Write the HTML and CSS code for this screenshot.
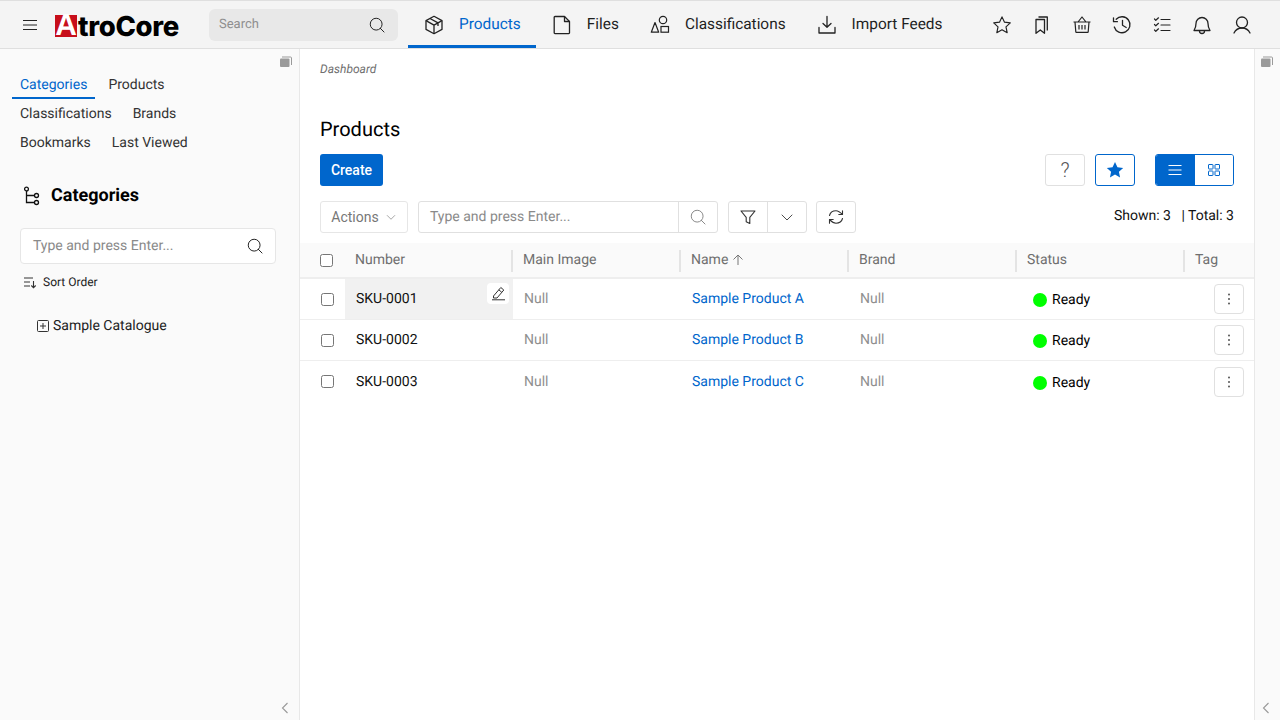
FILE: index.html
```html
<!DOCTYPE html>
<html lang="en">
<head>
<meta charset="utf-8">
<title>Products</title>
<link rel="stylesheet" href="styles.css">
</head>
<body>
<svg class="defs" width="0" height="0" aria-hidden="true">
  <symbol id="i-search" viewBox="0 0 256 256"><circle cx="116" cy="116" r="84" fill="none" stroke="currentColor" stroke-width="14"/><line x1="175" y1="175" x2="228" y2="228" stroke="currentColor" stroke-width="14" stroke-linecap="round"/></symbol>
  <symbol id="i-chev" viewBox="0 0 256 256"><polyline points="48,96 128,176 208,96" fill="none" stroke="currentColor" stroke-width="14" stroke-linecap="round" stroke-linejoin="round"/></symbol>
  <symbol id="i-kebab" viewBox="0 0 16 16"><circle cx="8" cy="3.500" r="1" fill="#555"/><circle cx="8" cy="8" r="1" fill="#555"/><circle cx="8" cy="12.500" r="1" fill="#555"/></symbol>
</svg>

<header class="topbar">
  <button class="burger" aria-label="Menu">
    <svg width="16" height="16" viewBox="0 0 16 16"><path d="M1 3.500h14M1 8h14M1 12.500h14" stroke="#222" stroke-width="1.200" fill="none"/></svg>
  </button>
  <div class="logo"><span class="logo-a">A</span><span class="logo-t">troCore</span></div>
  <div class="global-search">
    <span>Search</span>
    <svg viewBox="0 0 256 256" width="18" height="18"><use href="#i-search"/></svg>
  </div>
  <nav class="mainnav">
    <a class="nav-item active">
      <svg width="20" height="20" viewBox="0 0 20 20" fill="none" stroke="#222" stroke-width="1.300" stroke-linejoin="round"><path d="M10 1.300l8 4.300v8.800l-8 4.300-8-4.300V5.600z"/><path d="M2 5.600l8 4.500 8-4.500M10 10.100v8.300M6 3.500l8 4.400v3"/></svg>
      <span>Products</span>
    </a>
    <a class="nav-item">
      <svg width="20" height="20" viewBox="0 0 20 20" fill="none" stroke="#222" stroke-width="1.300" stroke-linejoin="round"><path d="M3 1.500h9.500l5 5v11.300a.8.8 0 0 1-.8.800H3a.8.8 0 0 1-.8-.8V2.300a.8.8 0 0 1 .8-.8z"/><path d="M12.500 1.500v5h5"/></svg>
      <span>Files</span>
    </a>
    <a class="nav-item">
      <svg width="20" height="20" viewBox="0 0 20 20" fill="none" stroke="#222" stroke-width="1.200"><circle cx="13" cy="5" r="3.700"/><path d="M5 7.500l3.700 9.700H1.300z" stroke-linejoin="round"/><rect x="11" y="11.500" width="7.500" height="5.700"/></svg>
      <span>Classifications</span>
    </a>
    <a class="nav-item">
      <svg width="20" height="20" viewBox="0 0 20 20" fill="none" stroke="#222" stroke-width="1.300" stroke-linecap="round" stroke-linejoin="round"><path d="M10 1.500v10.500M6 8.500l4 3.800 4-3.800M2 12.500v5.500h16v-5.500"/></svg>
      <span>Import Feeds</span>
    </a>
  </nav>
  <div class="tools">
    <svg width="20" height="20" viewBox="0 0 256 256" fill="none" stroke="#222" stroke-width="15" stroke-linejoin="round"><path d="M128 24l32 68 74 9-55 51 15 74-66-37-66 37 15-74-55-51 74-9z"/></svg>
    <svg width="20" height="20" viewBox="0 0 20 20" fill="none" stroke="#222" stroke-width="1.300" stroke-linejoin="round"><path d="M4 4.500h8.500v13.800l-4.200-3.300L4 18.300z"/><path d="M6.500 2h8.800v13.500"/></svg>
    <svg width="20" height="20" viewBox="0 0 20 20" fill="none" stroke="#222" stroke-width="1.200" stroke-linejoin="round"><path d="M1.500 7h17M6 7l4-5 4 5M3 7l.8 9.800a.6.6 0 0 0 .6.500h11.200a.6.6 0 0 0 .6-.5L17 7M7 10v4.500M10 10v4.500M13 10v4.500"/></svg>
    <svg width="20" height="20" viewBox="0 0 20 20" fill="none" stroke="#222" stroke-width="1.300" stroke-linecap="round" stroke-linejoin="round"><path d="M4.200 4.200a8 8 0 1 1-1.900 7.800"/><path d="M1.500 2.800v3.900h3.900M10.500 5.300v5l3.700 2.200"/></svg>
    <svg width="20" height="20" viewBox="0 0 20 20" fill="none" stroke="#222" stroke-width="1.200" stroke-linecap="round" stroke-linejoin="round"><path d="M9 4.500h9M9 10h9M9 15.500h9M2.500 4l1.300 1.300L6.500 2.800M2.500 9.500l1.300 1.300 2.700-2.500M2.500 15l1.300 1.300 2.700-2.500"/></svg>
    <svg width="20" height="20" viewBox="0 0 20 20" fill="none" stroke="#222" stroke-width="1.300" stroke-linejoin="round"><path d="M4 8.500a6 6 0 0 1 12 0c0 3.500 1 5.500 2 7H2c1-1.500 2-3.500 2-7z"/><path d="M7.500 16a2.500 2.500 0 0 0 5 0"/></svg>
    <svg width="20" height="20" viewBox="0 0 20 20" fill="none" stroke="#222" stroke-width="1.300" stroke-linecap="round"><circle cx="10" cy="7.500" r="5.500"/><path d="M2 18c1.500-3 4.500-5 8-5s6.500 2 8 5"/></svg>
  </div>
</header>

<div class="layout">
  <aside class="sidebar">
    <svg class="collapse-mark" width="12" height="12" viewBox="0 0 12 12"><rect x="0" y="2.500" width="9.500" height="8.500" rx="1" fill="#9a9a9a"/><path d="M2 1h8.500a1 1 0 0 1 1 1v7" fill="none" stroke="#9a9a9a"/></svg>
    <div class="side-tabs">
      <a class="side-tab active">Categories</a><a class="side-tab">Products</a>
      <a class="side-tab">Classifications</a><a class="side-tab">Brands</a>
      <a class="side-tab">Bookmarks</a><a class="side-tab">Last Viewed</a>
    </div>
    <h2 class="side-title">
      <svg width="20" height="20" viewBox="0 0 20 20" fill="none" stroke="#111" stroke-width="1.300"><circle cx="4.500" cy="3" r="1.900"/><circle cx="14.500" cy="9.500" r="2"/><circle cx="14.500" cy="16.500" r="2"/><path d="M4.500 5v11.500h8M4.500 9.500h8"/></svg>
      <span>Categories</span>
    </h2>
    <div class="side-search">
      <span>Type and press Enter...</span>
      <svg viewBox="0 0 256 256" width="18" height="18"><use href="#i-search"/></svg>
    </div>
    <div class="sort-order">
      <svg width="14" height="14" viewBox="0 0 14 14" fill="none" stroke="#333" stroke-width="1.100"><path d="M1 3h9M1 7h6M1 11h6M10.500 6v6.500M8.300 10.500l2.200 2.200 2.200-2.200"/></svg>
      <span>Sort Order</span>
    </div>
    <div class="tree-node">
      <svg width="12" height="12" viewBox="0 0 12 12" fill="none" stroke="#333"><rect x=".5" y=".5" width="11" height="11" rx="1"/><path d="M3 6h6M6 3v6"/></svg>
      <span>Sample Catalogue</span>
    </div>
    <svg class="side-arrow" width="8" height="12" viewBox="0 0 8 12" fill="none" stroke="#999" stroke-width="1.100"><path d="M6.500 1L1.500 6l5 5"/></svg>
  </aside>

  <main class="content">
    <div class="crumb">Dashboard</div>
    <h1 class="page-title">Products</h1>
    <div class="action-row">
      <button class="btn-create">Create</button>
      <div class="action-right">
        <button class="btn-square help">?</button>
        <button class="btn-square fav" aria-label="Favourite"><svg width="18" height="18" viewBox="0 0 256 256" fill="#0066cc"><path d="M128 14l35 74 81 10-60 55 16 80-72-40-72 40 16-80-60-55 81-10z"/></svg></button>
        <div class="view-toggle">
          <span class="vt on"><svg width="16" height="16" viewBox="0 0 16 16" stroke="#fff" fill="none"><path d="M1.500 3.500h13M1.500 8h13M1.500 12.500h13"/></svg></span>
          <span class="vt"><svg width="14" height="14" viewBox="0 0 14 14" stroke="#0066cc" fill="none"><rect x="1.500" y="1.500" width="4.500" height="4.500" rx=".5"/><rect x="8" y="1.500" width="4.500" height="4.500" rx=".5"/><rect x="1.500" y="8" width="4.500" height="4.500" rx=".5"/><rect x="8" y="8" width="4.500" height="4.500" rx=".5"/></svg></span>
        </div>
      </div>
    </div>
    <div class="filter-row">
      <button class="btn-outline actions">Actions <svg viewBox="0 0 256 256" width="12" height="12"><use href="#i-chev"/></svg></button>
      <div class="filter-search">
        <span class="fs-text">Type and press Enter...</span>
        <span class="fs-icon"><svg viewBox="0 0 256 256" width="18" height="18"><use href="#i-search"/></svg></span>
      </div>
      <div class="filter-group">
        <span class="fg-cell"><svg width="16" height="16" viewBox="0 0 16 16" fill="none" stroke="#333" stroke-width="1.100" stroke-linejoin="round"><path d="M1 2h14l-5.200 6.300v6.200l-3.600-1.800V8.300z"/></svg></span>
        <span class="fg-cell"><svg viewBox="0 0 256 256" width="16" height="16"><use href="#i-chev"/></svg></span>
      </div>
      <button class="btn-refresh" aria-label="Refresh"><svg width="16" height="16" viewBox="0 0 16 16" fill="none" stroke="#333" stroke-width="1.100" stroke-linecap="round" stroke-linejoin="round"><path d="M1.500 6.500C2.300 3.500 4.800 1.800 8 1.800c2.300 0 4 1.200 6.500 3.700M14.500 1.800v3.700h-3.700M14.500 9.500c-.8 3-3.300 4.700-6.500 4.700-2.300 0-4-1.200-6.500-3.700M1.500 14.200v-3.700h3.700"/></svg></button>
      <div class="counts">Shown: 3 &nbsp;&nbsp;| Total: 3</div>
    </div>

    <div class="grid-table">
      <div class="row head">
        <div class="cell check"><span class="cb"></span></div>
        <div class="cell first">Number</div>
        <div class="cell sep">Main Image</div>
        <div class="cell sep">Name <svg width="12" height="12" viewBox="0 0 12 12" fill="none" stroke="#777"><path d="M6 11V1M1.500 5.500L6 1l4.500 4.500"/></svg></div>
        <div class="cell sep">Brand</div>
        <div class="cell sep">Status</div>
        <div class="cell sep">Tag</div>
      </div>
      <div class="row">
        <div class="cell check"><span class="cb"></span></div>
        <div class="cell num hover">SKU-0001
          <span class="edit"><svg width="15" height="15" viewBox="0 0 15 15" fill="none" stroke="#333" stroke-linejoin="round"><path d="M2.500 10L9.800 1.500l3 2.500L6 12H2.500zM7.800 3.800l3 2.500M1 13.800h13"/></svg></span>
        </div>
        <div class="cell null">Null</div>
        <div class="cell link">Sample Product A</div>
        <div class="cell null">Null</div>
        <div class="cell status"><i class="dot"></i>Ready</div>
        <div class="cell more"><button class="kebab" aria-label="More"><svg width="16" height="16"><use href="#i-kebab"/></svg></button></div>
      </div>
      <div class="row">
        <div class="cell check"><span class="cb"></span></div>
        <div class="cell num">SKU-0002</div>
        <div class="cell null">Null</div>
        <div class="cell link">Sample Product B</div>
        <div class="cell null">Null</div>
        <div class="cell status"><i class="dot"></i>Ready</div>
        <div class="cell more"><button class="kebab" aria-label="More"><svg width="16" height="16"><use href="#i-kebab"/></svg></button></div>
      </div>
      <div class="row last">
        <div class="cell check"><span class="cb"></span></div>
        <div class="cell num">SKU-0003</div>
        <div class="cell null">Null</div>
        <div class="cell link">Sample Product C</div>
        <div class="cell null">Null</div>
        <div class="cell status"><i class="dot"></i>Ready</div>
        <div class="cell more"><button class="kebab" aria-label="More"><svg width="16" height="16"><use href="#i-kebab"/></svg></button></div>
      </div>
    </div>
  </main>

  <aside class="rightbar">
    <svg class="collapse-mark" width="12" height="12" viewBox="0 0 12 12"><rect x="0" y="2.500" width="9.500" height="8.500" rx="1" fill="#9a9a9a"/><path d="M2 1h8.500a1 1 0 0 1 1 1v7" fill="none" stroke="#9a9a9a"/></svg>
    <svg class="side-arrow" width="8" height="12" viewBox="0 0 8 12" fill="none" stroke="#999" stroke-width="1.100"><path d="M6.500 1L1.500 6l5 5"/></svg>
  </aside>
</div>
</body>
</html>
```

FILE: styles.css
```css
* { box-sizing: border-box; }
html, body { margin: 0; height: 100%; }
body { width: 1280px; height: 720px; overflow: hidden; background: #fff; color: #000; font-family: Roboto, "Liberation Sans", sans-serif; font-size: 14px; text-rendering: geometricPrecision; display: flex; flex-direction: column; }
button { font-family: inherit; font-size: 14px; padding: 0; cursor: pointer; }
.defs { position: absolute; }

.topbar { height: 49px; flex: none; display: flex; align-items: center; background: #f4f4f4; border-top: 1px solid #dfdfdf; border-bottom: 1px solid #dfdfdf; }
.burger { width: 16px; height: 16px; margin-left: 22px; background: none; border: 0; display: flex; }
.logo { margin-left: 17px; width: 125px; display: flex; align-items: center; margin-top: 2px; }
.logo-a { width: 22px; height: 22px; background: #c70e1a; color: #fff; font: 700 30px/22px "Liberation Sans", sans-serif; text-align: center; }
.logo-t { font: 800 27.500px/24px Inter, sans-serif; color: #000; letter-spacing: -.3px; margin-left: 1px; }
.global-search { margin-left: 29px; width: 189px; height: 32px; background: #e8e8e8; border-radius: 6px; display: flex; align-items: center; justify-content: space-between; padding: 0 12px 0 10px; font-size: 13px; color: #8f8f8f; }
.global-search svg { color: #222; }
.mainnav { margin-left: 10px; display: flex; height: 47px; align-self: flex-start; }
.nav-item { display: flex; align-items: center; gap: 15px; padding: 2px 15px 0 16px; font-size: 15.400px; color: #1f1f1f; border-bottom: 3px solid transparent; }
.nav-item svg { margin-top: 2px; }
.nav-item:last-child { padding-right: 0; }
.nav-item.active { color: #0066cc; border-bottom-color: #0066cc; }
.tools { margin-left: auto; margin-right: 28px; display: flex; gap: 20px; }

.layout { flex: 1; display: flex; min-height: 0; }
.sidebar { position: relative; width: 300px; flex: none; background: #fafafa; border-right: 1px solid #e8e8e8; padding: 0 23px 0 20px; }
.collapse-mark { position: absolute; right: 7px; top: 7px; }
.side-arrow { position: absolute; right: 10px; bottom: 6px; }
.side-tabs { margin: 27px 0 0 -8px; display: flex; flex-wrap: wrap; width: 240px; row-gap: 6px; }
.side-tab { height: 23px; line-height: 19px; padding: 0 8px; margin-right: 5px; color: #333; }
.side-tab:nth-child(2) { margin-right: 40px; }
.side-tab:nth-child(4) { margin-right: 60px; }
.side-tab.active { color: #0066cc; border-bottom: 2px solid #0066cc; }
.side-title { margin: 27px 0 0 2px; display: flex; align-items: center; gap: 9px; font-size: 18px; font-weight: 700; line-height: 24px; }
.side-search { margin-top: 20px; height: 36px; background: #fff; border: 1px solid #e6e6e6; border-radius: 4px; display: flex; align-items: center; justify-content: space-between; padding: 0 11px 0 12px; color: #8a8a8a; }
.side-search svg { color: #222; }
.sort-order { margin: 10px 0 0 3px; display: flex; align-items: center; gap: 6px; font-size: 12px; height: 16px; color: #222; }
.tree-node { margin: 26px 0 0 17px; display: flex; align-items: center; gap: 4px; color: #222; height: 20px; }

.content { flex: 1; min-width: 0; }
.crumb { margin: 13px 20px 0; font-size: 12px; font-style: italic; line-height: 14px; color: #6f6f6f; }
.page-title { margin: 39px 20px 0; font-size: 20px; font-weight: 400; line-height: 28px; }
.action-row { margin: 11px 20px 0; display: flex; justify-content: space-between; height: 32px; }
.btn-create { width: 63px; height: 32px; background: #0066cc; color: #fff; border: 0; border-radius: 3px; font-weight: 500; }
.action-right { display: flex; gap: 10px; }
.btn-square { width: 40px; height: 32px; background: #fff; border: 1px solid #e0e0e0; border-radius: 3px; font-size: 20px; font-weight: 300; color: #555; display: flex; align-items: center; justify-content: center; }
.btn-square.fav { border-color: #0066cc; }
.view-toggle { display: flex; margin-left: 10px; border: 1px solid #0066cc; border-radius: 3px; width: 79px; overflow: hidden; }
.vt { flex: 1; display: flex; align-items: center; justify-content: center; background: #fff; }
.vt.on { background: #0066cc; }
.filter-row { margin: 15px 20px 0; display: flex; align-items: center; height: 32px; }
.btn-outline.actions { width: 88px; height: 32px; background: #fff; border: 1px solid #e6e6e6; border-radius: 3px; color: #777; display: flex; align-items: center; justify-content: center; gap: 6px; }
.filter-search { margin-left: 10px; width: 300px; height: 32px; display: flex; border: 1px solid #e0e0e0; border-radius: 3px; color: #8a8a8a; background: #fff; }
.fs-text { flex: 1; padding-left: 11px; line-height: 30px; border-right: 1px solid #e0e0e0; }
.fs-icon { width: 38px; display: flex; align-items: center; justify-content: center; color: #888; }
.filter-group { margin-left: 10px; width: 79px; height: 32px; display: flex; border: 1px solid #e0e0e0; border-radius: 3px; color: #333; }
.fg-cell { flex: 1; display: flex; align-items: center; justify-content: center; }
.fg-cell + .fg-cell { border-left: 1px solid #e0e0e0; }
.btn-refresh { margin-left: 9px; width: 40px; height: 32px; background: #fff; border: 1px solid #e0e0e0; border-radius: 3px; display: flex; align-items: center; justify-content: center; }
.counts { margin-left: auto; color: #111; position: relative; top: -1px; }

.grid-table { margin-top: 10px; }
.row { display: grid; grid-template-columns: 45px 168px 168px 168px 168px 168px 69px; height: 41px; border-bottom: 1px solid #eee; align-items: center; }
.row.head { height: 36px; background: #fafafa; border-bottom: 2px solid #eee; color: #6f6f6f; }
.row.last { border-bottom: 0; }
.cell { display: flex; align-items: center; height: 100%; padding-left: 11px; position: relative; min-width: 0; }
.cell.check { padding-left: 21px; }
.row.head .cell.check { padding-left: 20px; }
.cell.first { padding-left: 10px; }
.cell.sep::before { content: ""; position: absolute; left: -2px; top: 7px; height: 22px; width: 2px; background: #e4e4e4; }
.cell.sep { padding-left: 10px; gap: 4px; }
.cb { width: 13px; height: 13px; border: 1px solid #767676; border-radius: 2.500px; background: #fff; display: block; }
.num { color: #111; }
.num.hover { background: #f1f1f1; }
.edit { position: absolute; right: 4px; top: 4px; width: 22px; height: 21px; background: #fff; border-radius: 4px; display: flex; align-items: center; justify-content: center; }
.null { color: #8f8f8f; }
.link { color: #0066cc; }
.status { padding-left: 16px; gap: 5px; padding-top: 2px; }
.dot { width: 14px; height: 14px; border-radius: 50%; background: #00ff00; display: block; }
.more { padding-left: 29px; }
.kebab { width: 30px; height: 30px; background: #fff; border: 1px solid #e0e0e0; border-radius: 4px; display: flex; align-items: center; justify-content: center; }

.rightbar { position: relative; width: 26px; flex: none; background: #fafafa; border-left: 1px solid #e8e8e8; }
```
